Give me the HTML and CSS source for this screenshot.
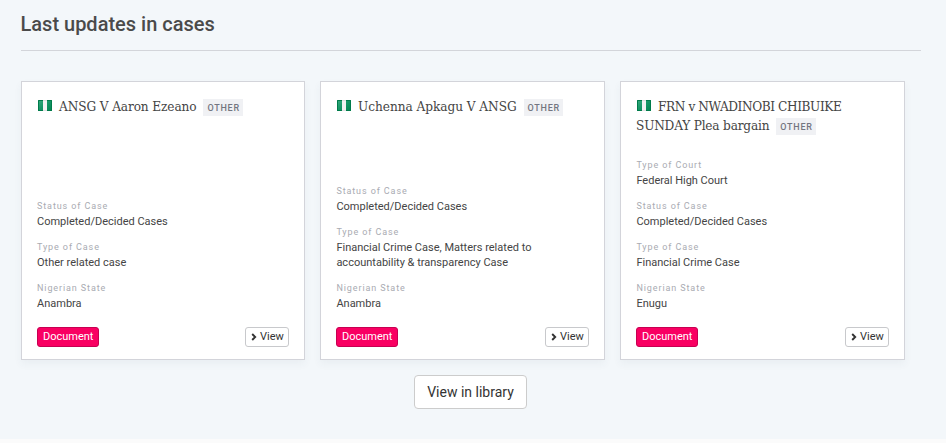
FILE: index.html
```
<!DOCTYPE html>
<html lang="en">
<head>
<meta charset="utf-8">
<title>Last updates in cases</title>
<link rel="stylesheet" href="styles.css">
</head>
<body>
<svg width="0" height="0" class="defs" aria-hidden="true">
  <defs>
    <linearGradient id="shade" x1="0" y1="0" x2="1" y2="1"><stop offset="0" stop-color="#38aa7e"/><stop offset=".5" stop-color="#149565"/><stop offset="1" stop-color="#008451"/></linearGradient>
    <symbol id="flag" viewBox="0 0 14 11"><rect width="14" height="11" fill="#f1f3f2"/><path d="M0 0h5v11H0zM9 0h5v11H9z" fill="url(#shade)"/><path d="M.5 11V.5H5M9 .5h4.500V11M0 10.500h5M9 10.500h5" fill="none" stroke="#007b4b"/><path d="M5 .5h4M5 10.500h4" stroke="#dce0de"/></symbol>
    <symbol id="chevron" viewBox="0 0 6 8"><path d="M1.200 1l3 3-3 3" fill="none" stroke="#333" stroke-width="1.900"/></symbol>
  </defs>
</svg>
<section class="updates">
  <h2>Last updates in cases</h2>
  <div class="cards">
    <article class="card">
      <h3><svg class="flag"><use href="#flag"/></svg><span class="name n1">ANSG V Aaron Ezeano</span><span class="tag">OTHER</span></h3>
      <dl>
        <dt>Status of Case</dt><dd>Completed/Decided Cases</dd>
        <dt>Type of Case</dt><dd>Other related case</dd>
        <dt>Nigerian State</dt><dd>Anambra</dd>
      </dl>
      <footer><a class="document">Document</a><a class="view"><svg><use href="#chevron"/></svg>View</a></footer>
    </article>
    <article class="card">
      <h3><svg class="flag"><use href="#flag"/></svg><span class="name n2">Uchenna Apkagu V ANSG</span><span class="tag">OTHER</span></h3>
      <dl>
        <dt>Status of Case</dt><dd>Completed/Decided Cases</dd>
        <dt>Type of Case</dt><dd>Financial Crime Case, Matters related to accountability &amp; transparency Case</dd>
        <dt>Nigerian State</dt><dd>Anambra</dd>
      </dl>
      <footer><a class="document">Document</a><a class="view"><svg><use href="#chevron"/></svg>View</a></footer>
    </article>
    <article class="card">
      <h3><svg class="flag"><use href="#flag"/></svg><span class="name n3">FRN v NWADINOBI CHIBUIKE</span><br><span class="name n4">SUNDAY Plea bargain</span><span class="tag">OTHER</span></h3>
      <dl>
        <dt>Type of Court</dt><dd>Federal High Court</dd>
        <dt>Status of Case</dt><dd>Completed/Decided Cases</dd>
        <dt>Type of Case</dt><dd>Financial Crime Case</dd>
        <dt>Nigerian State</dt><dd>Enugu</dd>
      </dl>
      <footer><a class="document">Document</a><a class="view"><svg><use href="#chevron"/></svg>View</a></footer>
    </article>
  </div>
  <a class="library">View in library</a>
</section>
</body>
</html>
```
FILE: styles.css
```
* { box-sizing: border-box; }
body { margin: 0; background: #fbfbfb; color: #444; font-family: Roboto, sans-serif; }
.defs { display: block; }
.updates { height: 439px; padding: 0 25px 0 21px; background: #f3f7fa; overflow: hidden; display: flex; flex-direction: column; }
h2 { margin: 0 0 30px; height: 51px; padding-top: 12px; border-bottom: 1px solid #d3d5da; font-size: 20px; line-height: 24px; font-weight: 500; color: #4a4a4a; text-indent: -.5px; }
.cards { display: grid; grid-template-columns: 284px 285px 285px; gap: 15px; height: 279px; }
.card { background: #fff; border: 1px solid #d3d4da; box-shadow: 0 4px 8px rgba(60, 80, 100, .05); padding: 15px 15px 12px; display: flex; flex-direction: column; }
.card + .card dl { padding-left: .4px; }
h3 { margin: 0; font-family: "Roboto Slab", "DejaVu Serif Condensed", "DejaVu Serif", serif; font-weight: 400; font-size: 13.5px; line-height: 19px; color: #444; white-space: nowrap; }
.flag { width: 14px; height: 11px; margin: 0 7px 0 1px; }
.n1 { letter-spacing: -.11px; }
.n2 { letter-spacing: -.04px; }
.n3 { letter-spacing: -.41px; }
.n4 { letter-spacing: -.19px; }
.tag { display: inline-block; margin-left: 7px; padding: 0 3px 0 4px; height: 17px; background: #f0f1f4; color: #737580; font: 500 9px/18px Roboto, sans-serif; letter-spacing: .75px; vertical-align: -5px; margin-top: -4px; position: relative; top: -5px; }
dl { margin: auto 0 0; font-size: 11px; line-height: 15px; }
dt { font-size: 9px; line-height: 14px; letter-spacing: .9px; color: #a9abb2; }
dd { margin: 1px 0 11px; }
dd:last-child { margin-bottom: 16px; }
footer { display: flex; justify-content: space-between; font-size: 11px; line-height: 18px; }
footer a { height: 20px; border: 1px solid #c8c9cc; border-radius: 3px; padding: 0 5px; }
.document { background: #f90062; border-color: #c70052; color: #fff; }
.view { display: flex; align-items: center; width: 44px; color: #333; }
.view svg { width: 6px; height: 8px; margin-right: 3px; flex: none; }
.library { margin: 15px 0 0 393px; width: 113px; height: 34px; border: 1px solid #ccc; border-radius: 4px; background: #fff; color: #333; font-size: 14px; line-height: 32px; text-align: center; }
```
